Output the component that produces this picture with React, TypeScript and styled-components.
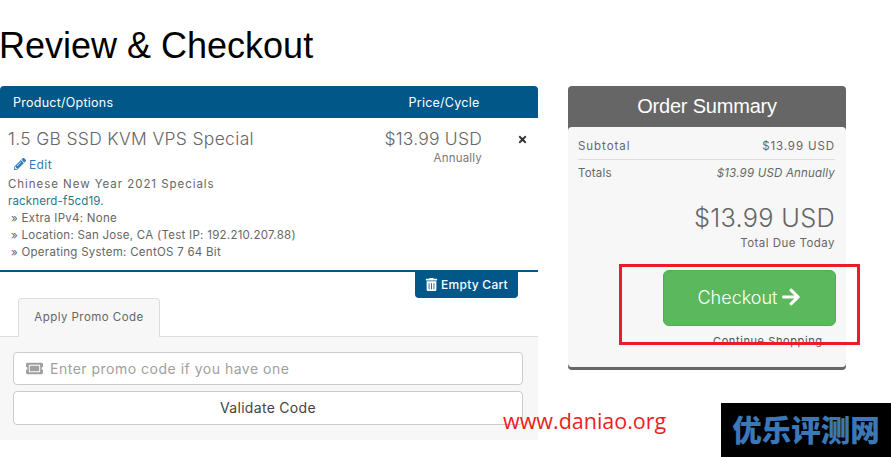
import styled, { createGlobalStyle } from "styled-components";
import { FaArrowRight, FaPencilAlt, FaTicketAlt, FaTimes, FaTrashAlt } from "react-icons/fa";

const GlobalStyle = createGlobalStyle`
  html, body {
    margin: 0;
    background: #fff;
  }
  * {
    box-sizing: border-box;
  }
`;

const options = [
  "Extra IPv4: None",
  "Location: San Jose, CA (Test IP: 192.210.207.88)",
  "Operating System: CentOS 7 64 Bit",
];

export default function App() {
  return (
    <S.Page>
      <GlobalStyle />
      <S.Title>Review &amp; Checkout</S.Title>
      <S.Columns>
        <S.Cart>
          <S.TableHead>
            <span>Product/Options</span>
            <S.PriceHead>Price/Cycle</S.PriceHead>
          </S.TableHead>
          <S.Item>
            <S.ItemInfo>
              <S.ItemName>1.5 GB SSD KVM VPS Special</S.ItemName>
              <S.EditLink>
                <FaPencilAlt size={12} />
                Edit
              </S.EditLink>
              <S.Group>Chinese New Year 2021 Specials</S.Group>
              <S.Domain>racknerd-f5cd19.</S.Domain>
              {options.map((o) => (
                <S.Option key={o}>» {o}</S.Option>
              ))}
            </S.ItemInfo>
            <S.ItemPrice>
              <S.Price>$13.99 USD</S.Price>
              <S.Cycle>Annually</S.Cycle>
            </S.ItemPrice>
            <S.Remove>
              <FaTimes size={11} />
            </S.Remove>
          </S.Item>
          <S.CartActions>
            <S.EmptyCart>
              <FaTrashAlt size={13} />
              Empty Cart
            </S.EmptyCart>
          </S.CartActions>
          <S.Tabs>
            <S.Tab>Apply Promo Code</S.Tab>
          </S.Tabs>
          <S.PromoPanel>
            <S.PromoInput>
              <FaTicketAlt size={17} />
              <span>Enter promo code if you have one</span>
            </S.PromoInput>
            <S.Validate>Validate Code</S.Validate>
          </S.PromoPanel>
        </S.Cart>
        <S.Summary>
          <S.SummaryHead>Order Summary</S.SummaryHead>
          <S.SummaryBody>
            <S.SubRow>
              <S.SubLabel>Subtotal</S.SubLabel>
              <S.SubValue>$13.99 USD</S.SubValue>
            </S.SubRow>
            <S.TotalRow>
              <span>Totals</span>
              <em>$13.99 USD Annually</em>
            </S.TotalRow>
            <S.Due>$13.99 USD</S.Due>
            <S.DueLabel>Total Due Today</S.DueLabel>
            <S.CheckoutRow>
              <S.Checkout>
                Checkout
                <FaArrowRight size={20} />
              </S.Checkout>
            </S.CheckoutRow>
            <S.Continue>Continue Shopping</S.Continue>
          </S.SummaryBody>
        </S.Summary>
      </S.Columns>
      <S.Highlight />
      <S.Watermark>www.daniao.org</S.Watermark>
      <S.Logo>优乐评测网</S.Logo>
    </S.Page>
  );
}

const font = `"Inter", "Open Sans", sans-serif`;

const S = {
  Page: styled.div`
    position: relative;
    width: 891px;
    height: 457px;
    overflow: hidden;
    font-family: ${font};
    color: #666;
  `,
  Title: styled.h1`
    margin: 0 0 0 -1px;
    height: 86px;
    padding-top: 25px;
    font-family: "Liberation Sans", sans-serif;
    font-size: 36px;
    line-height: 42px;
    font-weight: 400;
    color: #000;
  `,
  Columns: styled.div`
    display: flex;
    align-items: flex-start;
    gap: 30px;
  `,
  Cart: styled.div`
    width: 538px;
  `,
  TableHead: styled.div`
    display: flex;
    align-items: center;
    height: 32px;
    padding-left: 13px;
    background: #005788;
    border-radius: 4px 4px 0 0;
    color: #fff;
    font-size: 12.5px;
    font-weight: 400;
    letter-spacing: 0.25px;
  `,
  PriceHead: styled.span`
    margin-left: auto;
    width: 128px;
    margin-right: 30px;
    text-align: center;
  `,
  Item: styled.div`
    display: flex;
    height: 154px;
    padding: 10px 10px 0 8px;
    border-bottom: 2px solid #005788;
  `,
  ItemInfo: styled.div`
    flex: 1;
  `,
  ItemName: styled.div`
    font-size: 17.5px;
    line-height: 22px;
    font-weight: 300;
    letter-spacing: 0.32px;
  `,
  EditLink: styled.div`
    display: flex;
    align-items: center;
    gap: 3px;
    height: 18px;
    margin: 5px 0 0 6px;
    font-size: 12px;
    letter-spacing: 0.4px;
    color: #337ab7;
  `,
  Group: styled.div`
    margin-top: 3px;
    font-size: 11.5px;
    line-height: 17px;
    letter-spacing: 0.95px;
  `,
  Domain: styled.div`
    font-size: 11.5px;
    line-height: 17px;
    letter-spacing: 0.15px;
    color: #1f7a8c;
  `,
  Option: styled.div`
    padding-left: 3px;
    font-size: 11.5px;
    line-height: 17px;
    letter-spacing: 0.27px;
  `,
  ItemPrice: styled.div`
    width: 120px;
    margin-right: 35px;
    text-align: right;
  `,
  Price: styled.div`
    font-size: 17.5px;
    line-height: 22px;
    font-weight: 300;
    letter-spacing: 0.2px;
  `,
  Cycle: styled.div`
    font-size: 11.5px;
    line-height: 16px;
    letter-spacing: 0.2px;
    color: #777;
  `,
  Remove: styled.div`
    display: flex;
    align-items: center;
    height: 22px;
    color: #333;
  `,
  CartActions: styled.div`
    display: flex;
    justify-content: flex-end;
    padding-right: 20px;
  `,
  EmptyCart: styled.div`
    display: flex;
    align-items: center;
    justify-content: center;
    gap: 3px;
    width: 103px;
    height: 26px;
    padding-bottom: 2px;
    background: #005788;
    border-radius: 0 0 4px 4px;
    color: #fff;
    font-size: 12px;
    font-weight: 500;
    letter-spacing: 0.25px;
  `,
  Tabs: styled.div`
    display: flex;
    height: 39px;
    padding-left: 18px;
    border-bottom: 1px solid #ddd;
  `,
  Tab: styled.div`
    width: 142px;
    height: 39px;
    display: flex;
    align-items: center;
    justify-content: center;
    padding-bottom: 2px;
    background: #f7f7f7;
    border: 1px solid #ddd;
    border-bottom: 0;
    border-radius: 4px 4px 0 0;
    font-size: 11.5px;
    letter-spacing: 0.45px;
  `,
  PromoPanel: styled.div`
    display: flex;
    flex-direction: column;
    gap: 6px;
    height: 103px;
    padding: 15px 15px 0 13px;
    background: #f7f7f7;
  `,
  PromoInput: styled.div`
    display: flex;
    align-items: center;
    gap: 7px;
    height: 33px;
    padding-left: 12px;
    background: #fff;
    border: 1px solid #ccc;
    border-radius: 4px;
    color: #a0a0a0;
    font-size: 14px;
    letter-spacing: 0.5px;
  `,
  Validate: styled.div`
    display: flex;
    align-items: center;
    justify-content: center;
    height: 34px;
    padding-bottom: 1px;
    background: #fff;
    border: 1px solid #ccc;
    border-radius: 4px;
    color: #444;
    font-size: 14px;
    letter-spacing: 0.3px;
  `,
  Summary: styled.div`
    width: 278px;
    height: 284px;
    display: flex;
    flex-direction: column;
    background: #666;
    border-radius: 4px;
  `,
  SummaryHead: styled.div`
    height: 41px;
    display: flex;
    align-items: center;
    justify-content: center;
    color: #fff;
    font-family: "Liberation Sans", sans-serif;
    font-size: 20px;
    letter-spacing: -0.2px;
  `,
  SummaryBody: styled.div`
    height: 240px;
    padding: 10px 11px 0 10px;
    background: #f7f7f7;
    border-radius: 4px;
    font-size: 11.5px;
  `,
  SubRow: styled.div`
    display: flex;
    justify-content: space-between;
    height: 23px;
    line-height: 18px;
    border-bottom: 1px solid #ddd;
  `,
  SubLabel: styled.span`
    letter-spacing: 0.95px;
  `,
  SubValue: styled.span`
    letter-spacing: 0.9px;
  `,
  TotalRow: styled.div`
    display: flex;
    justify-content: space-between;
    height: 26px;
    padding-top: 4px;
    line-height: 18px;
    letter-spacing: 0.2px;
  `,
  Due: styled.div`
    margin-top: 17px;
    text-align: right;
    font-size: 25.3px;
    font-weight: 300;
    line-height: 30px;
    letter-spacing: 0.3px;
  `,
  DueLabel: styled.div`
    margin-top: 2px;
    text-align: right;
    line-height: 16px;
    letter-spacing: 0.45px;
  `,
  CheckoutRow: styled.div`
    display: flex;
    justify-content: flex-end;
    margin-top: 19px;
  `,
  Checkout: styled.div`
    display: flex;
    align-items: center;
    justify-content: center;
    gap: 4px;
    width: 173px;
    height: 56px;
    margin-right: -1px;
    padding-bottom: 2px;
    background: #5cb85c;
    border: 1px solid #4cae4c;
    border-radius: 6px;
    color: #fff;
    font-size: 18px;
    font-weight: 300;
  `,
  Continue: styled.div`
    margin: 8px 0 0 135px;
    font-size: 11px;
    line-height: 14px;
    letter-spacing: 0.6px;
    white-space: nowrap;
    color: #555;
  `,
  Highlight: styled.div`
    position: absolute;
    left: 619px;
    top: 264px;
    width: 241px;
    height: 81px;
    border: 3px solid #ed1c24;
  `,
  Watermark: styled.div`
    position: absolute;
    left: 503px;
    top: 406px;
    font-family: "Open Sans", sans-serif;
    font-size: 21.5px;
    line-height: 30px;
    color: #ed1c24;
  `,
  Logo: styled.div`
    position: absolute;
    left: 721px;
    top: 403px;
    width: 170px;
    height: 54px;
    display: flex;
    align-items: center;
    justify-content: center;
    padding: 0 0 5px 0;
    background: #000;
    color: #3a78b8;
    font-family: "Noto Sans CJK SC", sans-serif;
    font-size: 29.5px;
    font-weight: 900;
  `,
};
